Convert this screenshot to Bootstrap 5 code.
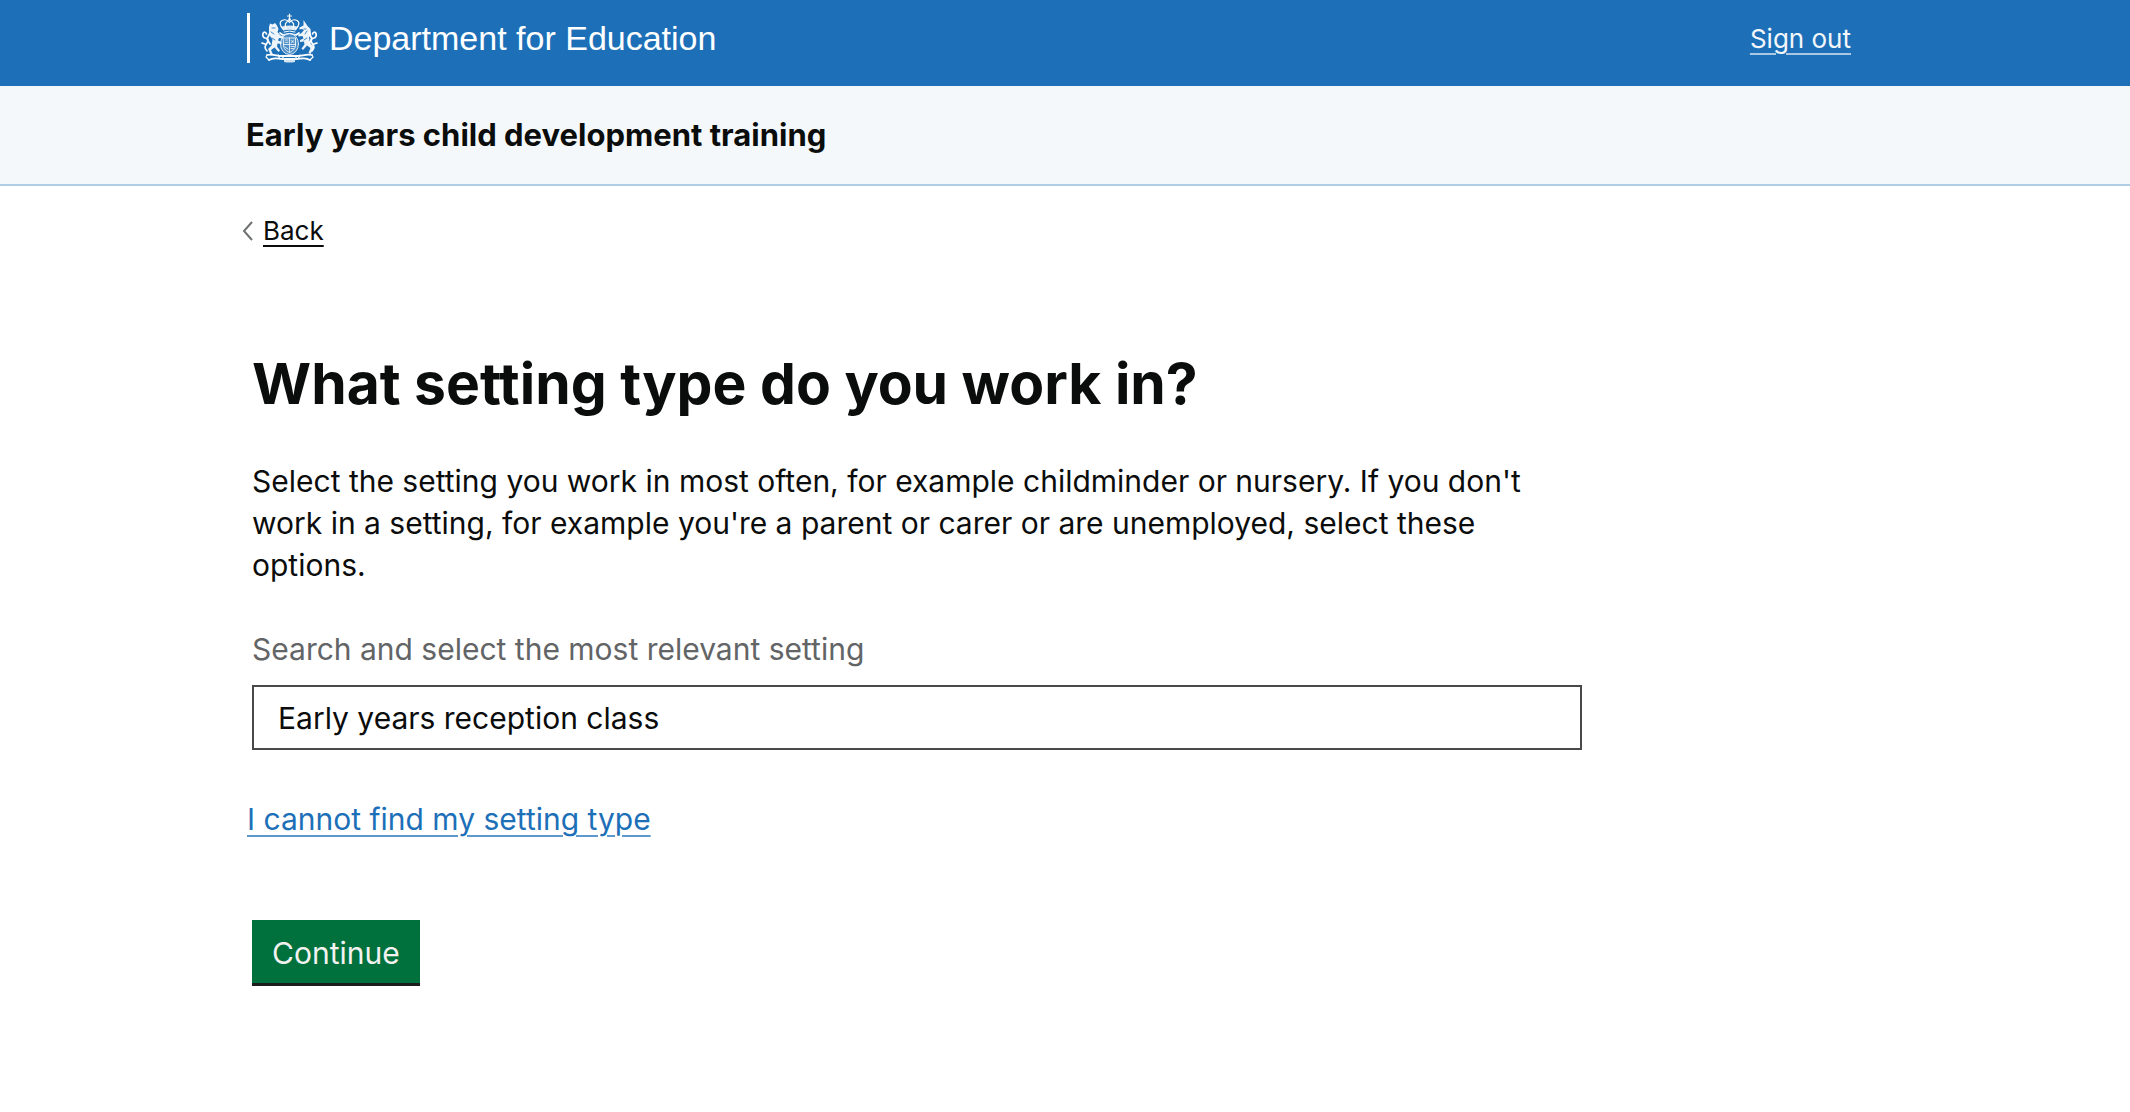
<!DOCTYPE html>
<html lang="en">
<head>
<meta charset="utf-8">
<meta name="viewport" content="width=device-width, initial-scale=1">
<title>What setting type do you work in?</title>
<link href="https://cdn.jsdelivr.net/npm/bootstrap@5.3.0/dist/css/bootstrap.min.css" rel="stylesheet">
<style>
  body { font-family: Inter, "Liberation Sans", sans-serif; font-size: 30px; line-height: 42px; color: #0b0c0c; background: #fff; }
  .page-width { max-width: 1638px; padding: 0; }
  .site-header { background: #1d70b8; padding: 13px 0 23px; }
  .brand-link { color: #fff; gap: 11px; }
  .brand-bar { width: 3px; height: 50px; background: #fff; margin-left: 1px; }
  .brand-crest { width: 57px; height: 50px; }
  .brand-name { font-family: "Liberation Sans", Arial, sans-serif; font-size: 34px; line-height: 50px; }
  .text-link { text-decoration: underline; text-decoration-thickness: 2px; text-underline-offset: 5px; }
  .sign-out { color: #f3f6fa; font-size: 26px; margin-right: 33px; padding-top: 2px; text-decoration-color: #a9c8e5; }
  .service-band { background: #f4f8fb; border-bottom: 2px solid #b0cde6; padding: 28px 0; }
  .service-name { font-size: 31px; line-height: 42px; font-weight: 700; color: #0b0c0c; }
  .back-row { font-size: 26px; padding-top: 24px; margin-left: -4px; gap: 10px; }
  .back-row svg { width: 11px; height: 20px; }
  .question { max-width: 1330px; margin: 98px 0 0 6px; }
  .question h1 { font-size: 57px; line-height: 68px; font-weight: 700; margin-bottom: 42px; }
  .hint-label { color: #626466; margin: 42px 0 15px; }
  .setting-input { font-size: 30px; line-height: 42px; color: #0b0c0c; border: 2px solid #484a4a; border-radius: 0; padding: 10px 24px 9px; }
  .missing-link { color: #1d70b8; text-decoration-color: #5e99cd; margin-left: -5px; }
  .continue-btn { background: #00703c; color: #f3f2f1; border: 0; border-radius: 0; border-bottom: 3px solid #1b1c1c; font-size: 30px; line-height: 42px; margin-top: 80px; padding: 12px 20px 9px; }
  .continue-btn:hover { background: #005a30; color: #fff; }
</style>
<script src="https://cdn.jsdelivr.net/npm/bootstrap@5.3.0/dist/js/bootstrap.bundle.min.js"></script>
</head>
<body>
<header class="site-header">
  <div class="container-fluid page-width d-flex align-items-center justify-content-between">
    <a href="#" class="brand-link d-flex align-items-center text-decoration-none">
      <span class="brand-bar"></span>
      <svg class="brand-crest" viewBox="0 0 57 50" fill="none" stroke="#fff" stroke-width="1" stroke-linecap="round" stroke-linejoin="round" aria-hidden="true">
        <!-- crown -->
        <path d="M28.500 1v5M26.500 3h4M22 16c-3-3-4-7-1-8.500 3-1.500 6 0 7.500 2 1.500-2 4.500-3.500 7.500-2 3 1.500 2 5.500-1 8.500M25 15c-1.500-3-1-6 3.500-7.500 4.500 1.500 5 4.500 3.500 7.500" stroke-width="1.200"/>
        <path d="M21 13.500q7.500-2 15 0l-1 4q-6.500-1.600-13 0z" fill="#fff" fill-opacity=".85" stroke="none"/>
        <circle cx="28.500" cy="6.500" r="1.300" fill="#fff" stroke="none"/>
        <path d="M23 19q5.500-2 11 0M22 21.500q6.500-2 13 0" stroke-width="1"/>
        <!-- shield and garter -->
        <ellipse cx="28.500" cy="31" rx="9" ry="10.500" fill="#fff" fill-opacity=".25" opacity=".85"/>
        <path d="M22.500 25h12v7c0 4-3 6-6 7.500-3-1.500-6-3.500-6-7.500z" opacity=".85"/>
        <path d="M28.500 25v14M22.500 31.500h12M24 27h3M24 29.300h3M30 27.500l3 2M30.500 30l2-3M24 34l3 2M30 33.500h3.500M30 35.500h2.500" stroke-width=".9" opacity=".85"/>
        <!-- lion -->
        <path d="M8 14l1-3.500 2.500 1 2.500-1.500 2 2.500 1.500 3.500-1 3 3 3.500 3 1-.5 2-4-.5-1 2.500 3.500 1.500v2l-4-.5-.5 3 3 4-1.500 1.500-4-4.500-3.500 2.500 2 4.500-2 1-3-6.500 3.500-3.500 1-6-2.500-3.500-1-4z" fill="#fff" fill-opacity=".92" stroke="none"/>
        <path d="M6 38c-3-3-2-5 0-8s1-5-2-5c-2 0-2.500-3-2-4.500 1-2 3-1.500 3.500.5M9 20l-3 6 3 5M19 20l3 2M1 30l3 1" stroke-width="1.700"/>
        <path d="M11 15h3M10 19l3 2M11 25l3 2" stroke="#1d70b8" stroke-width=".8"/>
        <!-- unicorn -->
        <path d="M42.500 7l4 6 3 3 .5 5-2 3.500 1 5.500 4 4-3.500 7-2-1 2-5-3.500-2.500-4 4.500-1.500-1.500 3-4-.5-3-4 .5v-2l3.500-1.500-1-2.500-4 .5-.5-2 3-1 3-3.500-2-1-2.500.5v-2l4-2z" fill="#fff" fill-opacity=".92" stroke="none"/>
        <path d="M51 38c3-3 2-5 0-8s-1-5 2-5c2 0 2.500-3 2-4.500-1-2-3-1.500-3.500.5M48 20l3 6-3 5M38 20l-3 2M56 30l-3 1" stroke-width="1.700"/>
        <path d="M43 16h2M46 18l-2 3M46 25l-3 2" stroke="#1d70b8" stroke-width=".8"/>
        <!-- compartment and motto -->
        <path d="M6 42c5-1.500 10 1 15 1h15c5 0 10-2.500 15-1M8 47c6-4 11 0 16-1h9c5 1 10-3 16 1" stroke-width="1.800"/>
        <path d="M6 42l-1 2 3 3M51 42l1 2-3 3M17 42l2 4M39 42l-2 4M23 43l-2 3M34 43l2 3" stroke-width="1.200"/>
        <path d="M23 47q5.500-2 11 0v2q-5.500 1-11 0z" fill="#fff" fill-opacity=".8" stroke="none"/>
      </svg>
      <span class="brand-name">Department for Education</span>
    </a>
    <a href="#" class="sign-out text-link">Sign out</a>
  </div>
</header>
<div class="service-band">
  <div class="container-fluid page-width">
    <div class="service-name">Early years child development training</div>
  </div>
</div>
<main class="container-fluid page-width">
  <nav class="back-row d-flex align-items-center" aria-label="Back">
    <svg viewBox="0 0 11 20" fill="none" stroke="#6f7272" stroke-width="2" aria-hidden="true"><path d="M10 1L2 10l8 9"/></svg>
    <a href="#" class="text-link text-reset">Back</a>
  </nav>
  <form class="question">
    <h1>What setting type do you work in?</h1>
    <p class="mb-0">Select the setting you work in most often, for example childminder or nursery. If you don't work in a setting, for example you're a parent or carer or are unemployed, select these options.</p>
    <label for="setting" class="hint-label d-block">Search and select the most relevant setting</label>
    <input id="setting" type="text" class="form-control setting-input" value="Early years reception class">
    <div class="pt-5"><a href="#" class="text-link missing-link">I cannot find my setting type</a></div>
    <button type="button" class="btn continue-btn">Continue</button>
  </form>
</main>
</body>
</html>
